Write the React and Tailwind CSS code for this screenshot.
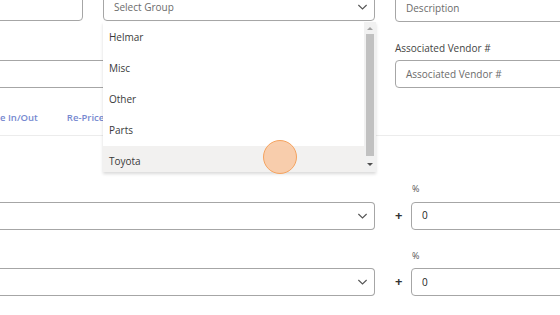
import React from 'react';

const ChevronDown = ({ className = '' }) => (
  <svg viewBox="0 0 12 8" className={className} fill="none" stroke="currentColor" strokeWidth="1.2">
    <path d="M1.5 1.8 L6 6.2 L10.5 1.8" />
  </svg>
);

const groups = ['Helmar', 'Misc', 'Other', 'Parts', 'Toyota'];

const App = () => {
  return (
    <div
      className="relative w-[560px] h-[315px] overflow-hidden bg-white text-[10px] text-[#444]"
      style={{ fontFamily: '"Open Sans", "Noto Sans", sans-serif' }}
    >
      {/* top row */}
      <div className="flex -mt-[7px] -ml-[40px]">
        <div className="shrink-0 w-[123px] h-[28px] border border-[#a6a6a6] rounded-[4px]" />
        <div className="shrink-0 ml-[20px] w-[272px] h-[28px] border border-[#a6a6a6] rounded-[4px] flex items-center justify-between pl-[10px] pr-[6px] text-[#6b6b6b]">
          <span>Select Group</span>
          <ChevronDown className="w-[11px] h-[8px] text-[#555]" />
        </div>
        <div className="shrink-0 ml-[20px] w-[200px] h-[29px] border border-[#a6a6a6] rounded-[4px] flex items-center pl-[10px] pt-[1px] text-[#6b6b6b]">
          Description
        </div>
      </div>

      {/* second row */}
      <div className="flex items-end mt-[19px] -ml-[40px]">
        <div className="shrink-0 w-[415px] h-[28px] border border-[#a6a6a6] border-r-[#5a6a9a] rounded-[4px]" />
        <div className="shrink-0 ml-[20px] flex flex-col">
          <span className="text-[#444] mb-[4px]">Associated Vendor #</span>
          <div className="w-[200px] h-[28px] border border-[#a6a6a6] rounded-[4px] flex items-center pl-[10px] text-[#6b6b6b]">
            Associated Vendor #
          </div>
        </div>
      </div>

      {/* tabs */}
      <div className="mt-[20px] flex h-[28px] border-b border-[#ececec] font-semibold text-[9.5px] text-[#7689d0]">
        <span className="leading-[20px]">e In/Out</span>
        <span className="ml-[29px] leading-[20px]">Re-Price</span>
      </div>

      {/* price rows */}
      <div className="mt-[46px] flex flex-col gap-[19px]">
        {[0, 1].map((i) => (
          <div key={i} className="flex items-end">
            <div className="shrink-0 w-[375px] h-[28px] border border-[#a6a6a6] border-l-0 rounded-r-[4px] flex items-center justify-end pr-[6px]">
              <ChevronDown className="w-[11px] h-[8px] text-[#555]" />
            </div>
            <span className="shrink-0 w-[36px] h-[28px] flex items-center pl-[20px] text-[13px] font-bold text-[#333]">+</span>
            <div className="shrink-0 flex flex-col">
              <span className="ml-[1px] mb-[6px] text-[9px] text-[#555]">%</span>
              <div className="w-[160px] h-[28px] border border-[#a6a6a6] rounded-[4px] flex items-center pl-[10px] text-[#222]">
                0
              </div>
            </div>
          </div>
        ))}
      </div>

      {/* open dropdown */}
      <div className="absolute left-[103px] top-[22px] w-[273px] h-[150px] overflow-hidden bg-white shadow-[0_2px_3px_rgba(0,0,0,0.15)] flex">
        <div className="flex-1 flex flex-col">
          {groups.map((g) => (
            <div
              key={g}
              className={`shrink-0 h-[31px] flex items-center pl-[6px] text-[#3a3a3a] ${g === 'Toyota' ? 'bg-[#f2f1f0]' : ''}`}
            >
              {g}
            </div>
          ))}
        </div>
        <div className="w-[12px] bg-[#f1f1f1] flex flex-col items-center">
          <div className="h-[12px] flex items-center justify-center">
            <div className="w-0 h-0 border-l-[3px] border-r-[3px] border-b-[3px] border-l-transparent border-r-transparent border-b-[#a3a3a3]" />
          </div>
          <div className="w-[8px] h-[122px] bg-[#c1c1c1]" />
          <div className="flex-1 flex items-center justify-center">
            <div className="w-0 h-0 border-l-[3px] border-r-[3px] border-t-[3px] border-l-transparent border-r-transparent border-t-[#505050]" />
          </div>
        </div>
      </div>

      {/* cursor highlight */}
      <div className="absolute left-[263px] top-[140px] w-[34px] h-[34px] rounded-full bg-[#f8c9a4]/90 border border-[#f5a35f]" />
    </div>
  );
};

export default App;
